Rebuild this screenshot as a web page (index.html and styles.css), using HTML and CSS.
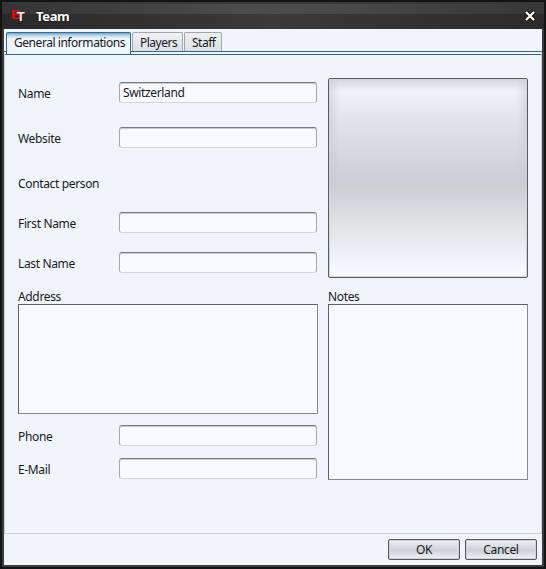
FILE: index.html
```html
<!DOCTYPE html>
<html lang="en">
<head>
<meta charset="utf-8">
<title>Team</title>
<link rel="stylesheet" href="styles.css">
</head>
<body>
<div class="window">
  <header class="titlebar">
    <div class="logo"><span class="logo-e">E</span><span class="logo-t">T</span></div>
    <h1>Team</h1>
    <svg class="close" width="12" height="12" viewBox="0 0 12 12"><path class="halo" d="M2 2L10 10M10 2L2 10"/><path class="cross" d="M2 2L10 10M10 2L2 10"/></svg>
  </header>
  <main class="client">
    <nav class="tabs">
      <div class="tab active">General informations</div>
      <div class="tab players">Players</div>
      <div class="tab staff">Staff</div>
    </nav>
    <section class="panel">
      <div class="column">
        <div class="row name"><label>Name</label><div class="input">Switzerland</div></div>
        <div class="row website"><label>Website</label><div class="input"></div></div>
        <div class="row contact"><label>Contact person</label></div>
        <div class="row first"><label>First Name</label><div class="input"></div></div>
        <div class="row last"><label>Last Name</label><div class="input"></div></div>
        <label class="area-label">Address</label>
        <div class="area address"></div>
        <div class="row phone"><label>Phone</label><div class="input"></div></div>
        <div class="row email"><label>E-Mail</label><div class="input"></div></div>
      </div>
      <div class="column side">
        <div class="picture"></div>
        <label class="area-label notes-label">Notes</label>
        <div class="area notes"></div>
      </div>
    </section>
    <footer class="actions">
      <div class="button">OK</div>
      <div class="button">Cancel</div>
    </footer>
  </main>
</div>
</body>
</html>
```
FILE: styles.css
```css
* { box-sizing: border-box; }
body { margin: 0; font: 12px/16px "Noto Sans", "Open Sans", sans-serif; color: #17191e; letter-spacing: -0.35px; }
.window {
  width: 546px; height: 569px; padding: 0 2px 2px;
  border: 2px solid #141414;
  background: #3c3c3c;
}
.titlebar {
  height: 27px; margin: 0 -2px; padding: 0 8px 0 9px; display: flex; align-items: center;
  border-top: 2px solid #383838;
  background:
    linear-gradient(90deg, #343434, #4c4c4c 45%, #4a4a4a 60%, #373737) 0 0 / 100% 10px no-repeat,
    linear-gradient(90deg, #292929, #3a3a3a 50%, #2b2b2b);
}
.logo { display: flex; align-items: flex-start; width: 25px; height: 14px; font: bold 13px/12px "Liberation Sans", sans-serif; letter-spacing: 0; }
.logo-e { color: #f00; font-size: 13px; letter-spacing: -2px; margin-top: -1px; }
.logo-t { color: #eee; margin-top: 1px; margin-left: -1px; }
h1 { margin: -1px 0 0; font-size: 13px; line-height: 18px; color: #fff; flex: 1; text-shadow: 0 0 2px #000; letter-spacing: -0.35px; }
.close { margin-top: -1px; }
.close path { fill: none; }
.halo { stroke: #111; stroke-width: 4; }
.cross { stroke: #fff; stroke-width: 2.2; }
.client { width: 538px; height: 536px; background: #f0f5fa; display: flex; flex-direction: column; }
.tabs { height: 22px; padding: 3px 0 0 2px; display: flex; gap: 1px; }
.tab {
  height: 19px; padding: 2px 0 0 7px; white-space: nowrap; border: 1px solid #a2a6ab; border-bottom: 0;
  border-radius: 2px 2px 0 0; background: linear-gradient(#eff1f4, #dde0e4); letter-spacing: -0.5px;
}
.active {
  width: 125px; height: 22px; position: relative; border-color: #356b99; letter-spacing: -0.45px;
  background: linear-gradient(#73a4c9, #c7dfed 3px, #f0f5fa 6px);
}
.players { width: 51px; }
.staff { width: 38px; }
.panel {
  height: 483px; padding: 23px 13px 0; display: grid; grid-template-columns: 300px 200px; gap: 10px;
  border: 1px solid #c9cfdc; border-top: 4px double #356691;
}
.column { display: flex; flex-direction: column; }
.row { display: flex; height: 21px; flex: none; }
label { display: block; width: 101px; flex: none; white-space: nowrap; padding-top: 4px; }
.input {
  width: 198px; height: 21px; padding: 2px 3px; border: 1px solid #a6a9ac;
  border-top-color: #777a7e; border-bottom-color: #d0d5d9; border-radius: 3px;
  background: #f7fbff; box-shadow: inset 0 1px #c9cdd1;
}
.name { margin-top: 4px; }
.website { margin-top: 24px; }
.contact { margin-top: 24px; }
.first { margin-top: 19px; }
.last { margin-top: 19px; }
.area-label { height: 16px; margin-top: 15px; padding: 1px 0 0; }
.area { border: 1px solid #85898d; border-top-color: #5d6267; border-left-color: #5d6267; background: #f7fbff; }
.address { height: 110px; }
.phone { margin-top: 11px; }
.email { margin-top: 12px; }
.picture {
  height: 200px; border: 1px solid #575c61; border-radius: 2px;
  box-shadow: inset 0 0 0 1px #d2d6d9;
  background:
    linear-gradient(90deg, rgba(200,205,207,.6), rgba(200,205,207,0) 11px, rgba(200,205,207,0) 187px, rgba(200,205,207,.6)) 0 0 / 100% 105px no-repeat,
    linear-gradient(#d2d6d8, #eff3f7 12px, #e2e6eb 38px, #d7dbdf 68px, #d2d7df 80px, #ced1d5 94px, #cbced8 101px, #cccfd2 108px, #dadedf 135px, #e6eaeb 160px, #f3f4f8 180px, #f8f9fd 195px);
}
.notes-label { margin-top: 10px; }
.notes { height: 176px; }
.actions { display: flex; justify-content: flex-end; gap: 5px; padding: 5px 5px 0; }
.button {
  width: 72px; height: 21px; border: 1px solid #565a5f; border-radius: 2px; text-align: center; line-height: 19px;
  background: linear-gradient(#f0f2f5, #cdd0d4 55%, #f1f3f7); box-shadow: inset 0 0 0 1px #cdd1d4;
}
```
